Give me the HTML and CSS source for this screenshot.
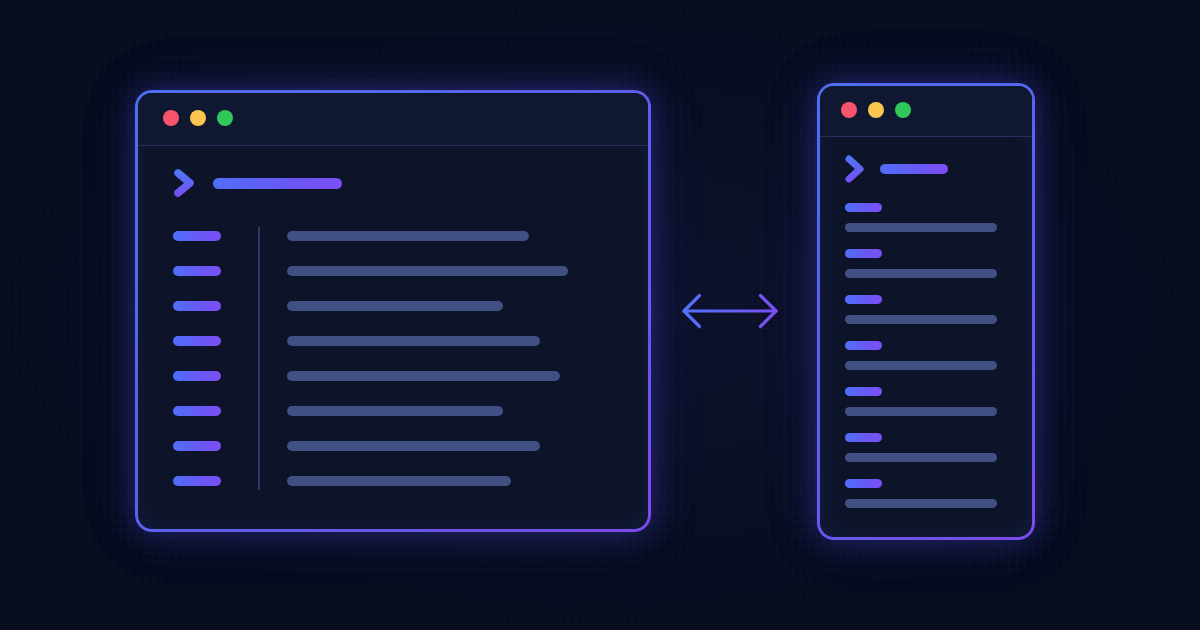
FILE: index.html
```html
<!DOCTYPE html>
<html>
<head>
<meta charset="utf-8">
<link rel="stylesheet" href="styles.css">
</head>
<body>
<div class="stage">
  <div class="win win-lg">
    <div class="titlebar">
      <span class="dot red"></span><span class="dot yellow"></span><span class="dot green"></span>
    </div>
    <div class="body-lg">
      <div class="prompt">
        <svg class="chev" width="24" height="32" viewBox="0 0 24 32">
          <defs><linearGradient id="cg1" gradientUnits="userSpaceOnUse" x1="0" y1="4" x2="0" y2="28"><stop offset="0" stop-color="#4f76f7"/><stop offset="1" stop-color="#7350f3"/></linearGradient></defs>
          <path d="M8 6 L20 16 L8 26" fill="none" stroke="url(#cg1)" stroke-width="7.5" stroke-linecap="round" stroke-linejoin="round"/>
        </svg>
        <span class="gbar prompt-bar-lg"></span>
      </div>
      <div class="rows">
        <div class="col labels">
          <div class="row"><span class="gbar label"></span></div>
          <div class="row"><span class="gbar label"></span></div>
          <div class="row"><span class="gbar label"></span></div>
          <div class="row"><span class="gbar label"></span></div>
          <div class="row"><span class="gbar label"></span></div>
          <div class="row"><span class="gbar label"></span></div>
          <div class="row"><span class="gbar label"></span></div>
          <div class="row"><span class="gbar label"></span></div>
        </div>
        <div class="divider"></div>
        <div class="col lines">
          <div class="row"><span class="sbar" style="width:242px"></span></div>
          <div class="row"><span class="sbar" style="width:281px"></span></div>
          <div class="row"><span class="sbar" style="width:216px"></span></div>
          <div class="row"><span class="sbar" style="width:253px"></span></div>
          <div class="row"><span class="sbar" style="width:273px"></span></div>
          <div class="row"><span class="sbar" style="width:216px"></span></div>
          <div class="row"><span class="sbar" style="width:253px"></span></div>
          <div class="row"><span class="sbar" style="width:224px"></span></div>
        </div>
      </div>
    </div>
  </div>

  <svg class="arrow" width="100" height="40" viewBox="0 0 100 40">
    <defs><linearGradient id="ag" gradientUnits="userSpaceOnUse" x1="4" y1="0" x2="96" y2="0"><stop offset="0" stop-color="#4f72f7"/><stop offset="1" stop-color="#7c4ff2"/></linearGradient></defs>
    <g fill="none" stroke="url(#ag)" stroke-width="3.2" stroke-linecap="round" stroke-linejoin="round">
      <path d="M4 20 H96"/>
      <path d="M19.5 4.5 L4 20 L19.5 35.5"/>
      <path d="M80.5 4.5 L96 20 L80.5 35.5"/>
    </g>
  </svg>

  <div class="win win-sm">
    <div class="titlebar titlebar-sm">
      <span class="dot red"></span><span class="dot yellow"></span><span class="dot green"></span>
    </div>
    <div class="body-sm">
      <div class="prompt prompt-sm">
        <svg class="chev" width="24" height="32" viewBox="0 0 24 32">
          <defs><linearGradient id="cg2" gradientUnits="userSpaceOnUse" x1="0" y1="4" x2="0" y2="28"><stop offset="0" stop-color="#4f76f7"/><stop offset="1" stop-color="#7350f3"/></linearGradient></defs>
          <path d="M8 6 L19 16 L8 26" fill="none" stroke="url(#cg2)" stroke-width="7" stroke-linecap="round" stroke-linejoin="round"/>
        </svg>
        <span class="gbar prompt-bar-sm"></span>
      </div>
      <div class="items">
        <div class="item"><span class="gbar small"></span><span class="sbar long"></span></div>
        <div class="item"><span class="gbar small"></span><span class="sbar long"></span></div>
        <div class="item"><span class="gbar small"></span><span class="sbar long"></span></div>
        <div class="item"><span class="gbar small"></span><span class="sbar long"></span></div>
        <div class="item"><span class="gbar small"></span><span class="sbar long"></span></div>
        <div class="item"><span class="gbar small"></span><span class="sbar long"></span></div>
        <div class="item"><span class="gbar small"></span><span class="sbar long"></span></div>
      </div>
    </div>
  </div>
</div>
</body>
</html>
```

FILE: styles.css
```css
* { box-sizing: border-box; }

html, body {
  margin: 0;
  padding: 0;
}

body {
  width: 1200px;
  height: 630px;
  overflow: hidden;
  font-family: "Inter", "Liberation Sans", sans-serif;
  background-color: #070b1e;
  background-image:
    radial-gradient(ellipse at 50% 50%, rgba(30, 36, 90, 0.25) 0%, rgba(7, 11, 30, 0) 70%),
    linear-gradient(rgba(255, 255, 255, 0.014) 1px, transparent 1px),
    linear-gradient(90deg, rgba(255, 255, 255, 0.014) 1px, transparent 1px);
  background-size: 100% 100%, 8px 8px, 8px 8px;
}

.stage {
  display: flex;
  align-items: center;
  height: 630px;
  padding-left: 135px;
  padding-bottom: 8px;
}

.win {
  border: 3px solid transparent;
  border-radius: 17px;
  background:
    linear-gradient(#0d1429, #0d1429) padding-box,
    linear-gradient(135deg, #4e6ff2 0%, #5a62ee 45%, #7b4ceb 100%) border-box;
  box-shadow:
    0 0 28px rgba(84, 88, 255, 0.32),
    0 0 60px rgba(90, 70, 240, 0.12),
    inset 0 0 22px rgba(90, 100, 255, 0.10);
  display: flex;
  flex-direction: column;
  overflow: hidden;
}

.win-lg {
  width: 516px;
  height: 442px;
}

.win-sm {
  width: 218px;
  height: 457px;
  margin-left: 37px;
}

.titlebar {
  height: 53px;
  display: flex;
  align-items: center;
  gap: 11px;
  padding-left: 25px;
  padding-bottom: 2px;
  background: #101831;
  border-bottom: 1.5px solid #27315c;
  flex-shrink: 0;
}

.titlebar-sm {
  height: 51px;
  padding-left: 21px;
  padding-bottom: 1px;
}

.dot {
  width: 16px;
  height: 16px;
  border-radius: 50%;
  display: block;
}
.red { background: #f5546c; }
.yellow { background: #fbc54f; }
.green { background: #30c75a; }

.body-lg {
  padding: 21px 0 0 32px;
}

.prompt {
  display: flex;
  align-items: center;
  height: 32px;
  gap: 19px;
}

.chev { display: block; flex-shrink: 0; }

.gbar {
  display: block;
  border-radius: 6px;
  background: linear-gradient(90deg, #4f6ff8 0%, #6a57f6 60%, #7c4ff4 100%);
}

.sbar {
  display: block;
  height: 10px;
  border-radius: 6px;
  background: #415083;
}

.prompt-bar-lg {
  width: 129px;
  height: 11px;
}

.rows {
  display: flex;
  margin-top: 19px;
  margin-left: 3px;
}

.col {
  display: flex;
  flex-direction: column;
}

.row {
  height: 35px;
  display: flex;
  align-items: center;
}

.labels { width: 48px; }

.label {
  width: 48px;
  height: 10px;
}

.divider {
  width: 2px;
  margin: 9px 27px 8px 37px;
  background: #2d3866;
}

.body-sm {
  padding: 16px 0 0 21px;
}

.prompt-sm { gap: 15px; }

.prompt-bar-sm {
  width: 68px;
  height: 10px;
}

.items {
  display: flex;
  flex-direction: column;
  gap: 17px;
  margin-top: 18px;
  margin-left: 4px;
}

.item {
  display: flex;
  flex-direction: column;
  gap: 11px;
}

.small {
  width: 37px;
  height: 9px;
}

.long {
  width: 152px;
  height: 9px;
}

.arrow {
  display: block;
  margin-left: 29px;
  flex-shrink: 0;
}
```
